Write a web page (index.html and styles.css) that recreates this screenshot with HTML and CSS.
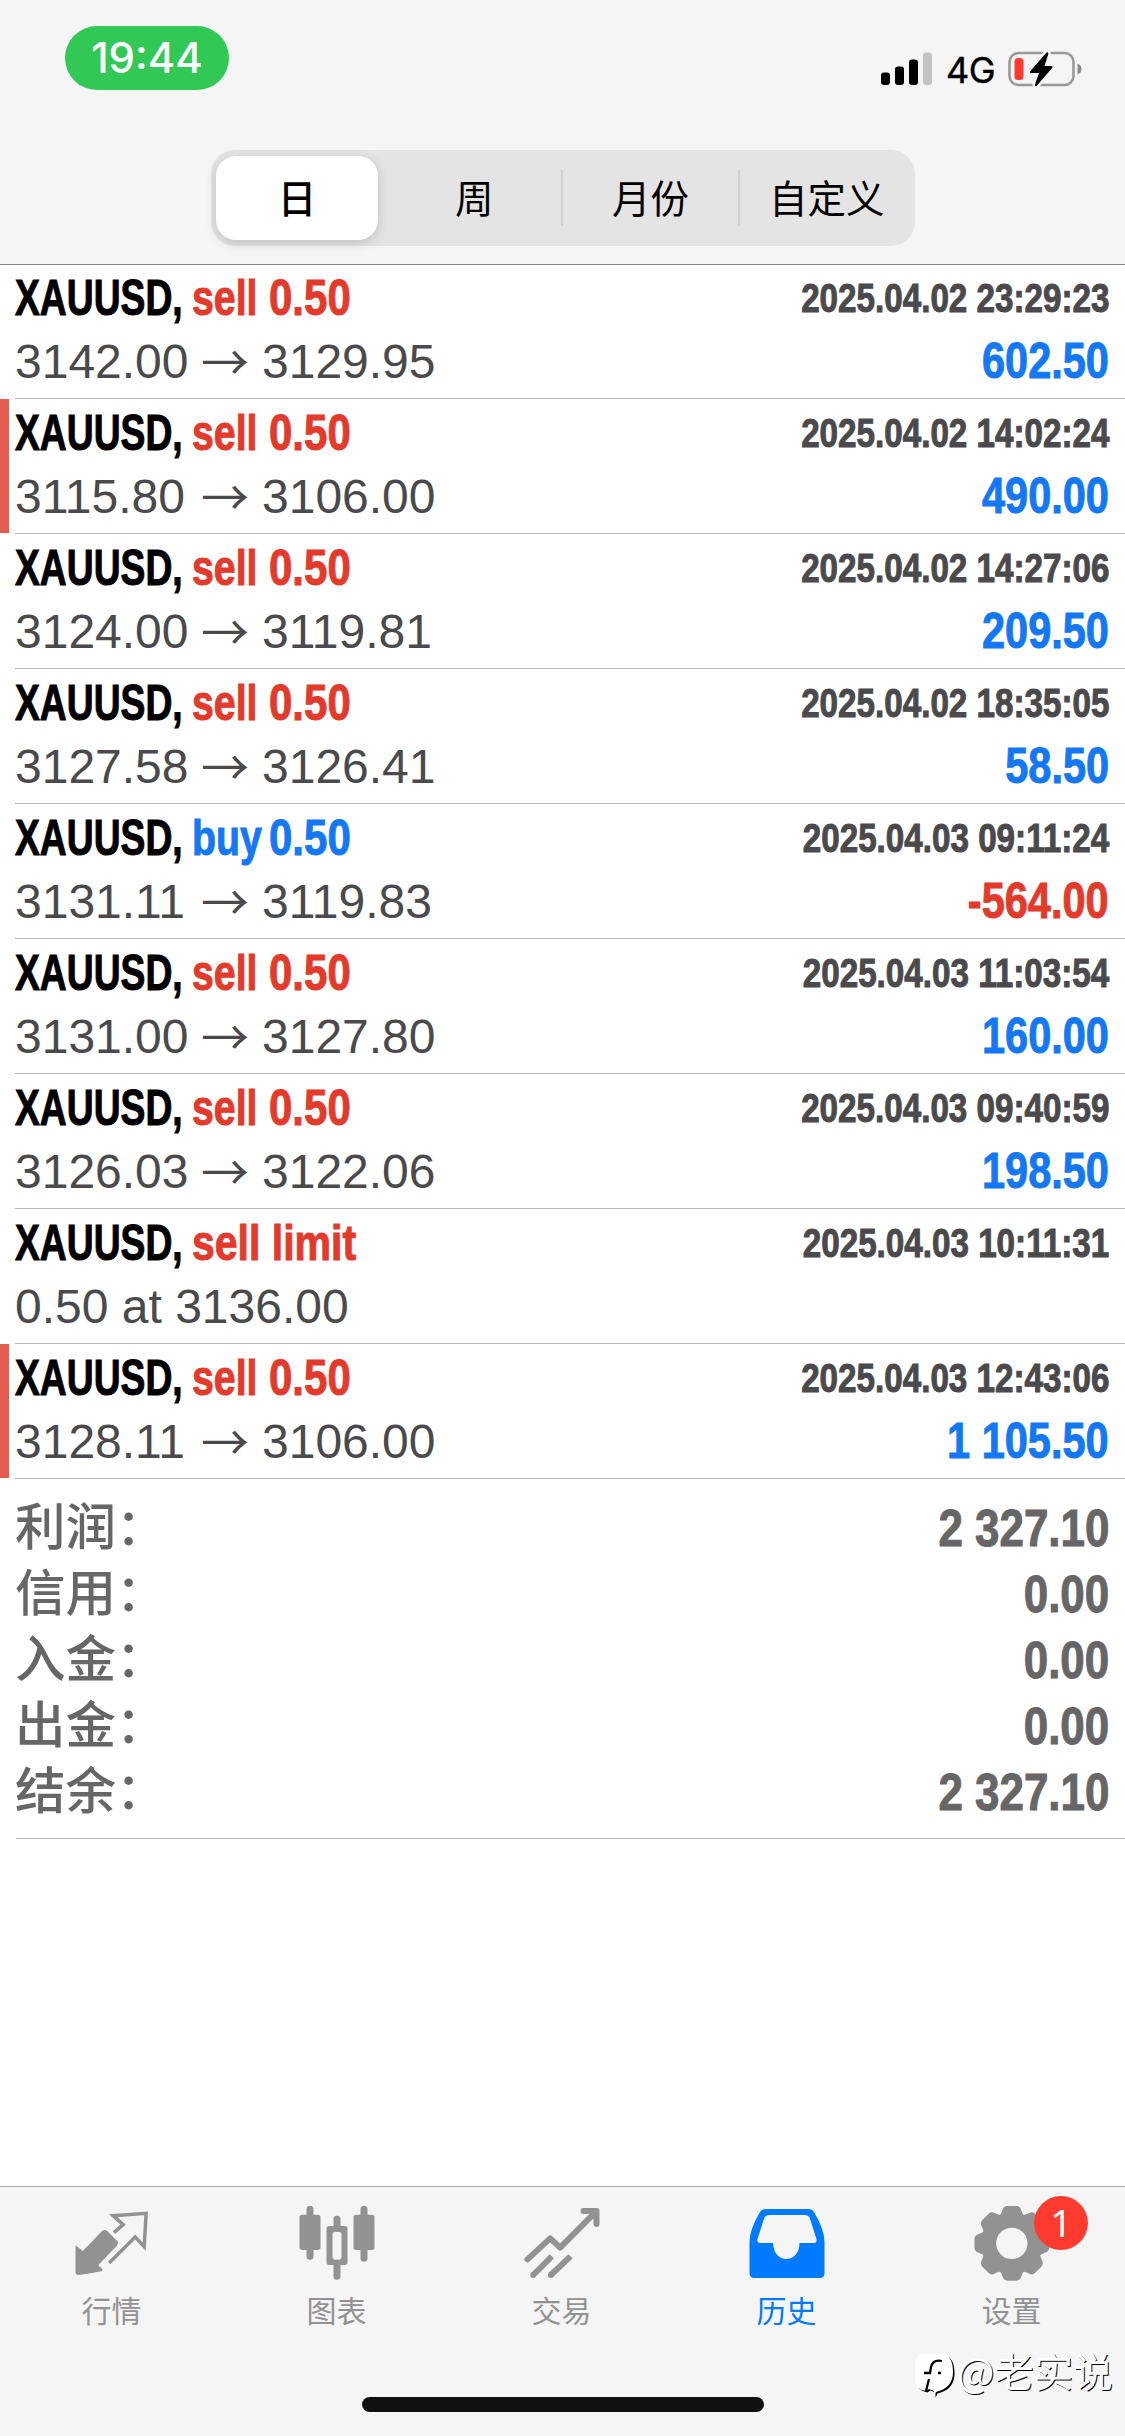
FILE: index.html
```html
<!DOCTYPE html>
<html lang="zh-CN">
<head>
<meta charset="utf-8">
<title>历史</title>
<link rel="stylesheet" href="styles.css">
</head>
<body>
<div class="app">
  <header class="header">
    <div class="status">
      <div class="clock">19:44</div>
      <div class="indicators">
        <svg class="signal" viewBox="0 0 52 34" width="52" height="34">
          <rect x="0" y="20.500" width="9" height="12.500" rx="3"/>
          <rect x="14" y="14.500" width="9" height="18.500" rx="3"/>
          <rect x="28" y="7.500" width="9" height="25.500" rx="3"/>
          <rect x="42" y="0.500" width="9" height="32.500" rx="3" fill="#c4c4c4"/>
        </svg>
        <span class="network">4G</span>
        <svg class="battery" viewBox="0 0 75 36" width="75" height="36">
          <rect x="1.500" y="2" width="64" height="32" rx="9" fill="none" stroke="#999" stroke-width="2.600"/>
          <path d="M69.500 12.500Q73.500 14 73.500 18T69.500 23.500Z" fill="#8c8c8c"/>
          <rect x="6.500" y="7" width="9" height="22" rx="3.500" fill="#ff3b30"/>
          <path class="bolt" d="M38.500 1.500L22 20.500Q21.500 22 23 22H31L27 33.500Q27 36 29 34.500L44.500 16.500Q45 15 43.500 15H36.500L40.300 3Q40.500 0.500 38.500 1.500Z"/>
        </svg>
      </div>
    </div>
    <div class="segments">
      <div class="segment active">日</div>
      <div class="segment">周</div>
      <div class="segment divided">月份</div>
      <div class="segment divided">自定义</div>
    </div>
  </header>

  <main class="history">
    <div class="deal">
      <div class="line"><span class="symbol">XAUUSD,</span><span class="word sell">sell</span><span class="volume sell">0.50</span><span class="time">2025.04.02 23:29:23</span></div>
      <div class="line"><span class="price">3142.00</span><span class="arrow">→</span><span class="price">3129.95</span><span class="profit">602.50</span></div>
    </div>
    <div class="deal marked">
      <div class="line"><span class="symbol">XAUUSD,</span><span class="word sell">sell</span><span class="volume sell">0.50</span><span class="time">2025.04.02 14:02:24</span></div>
      <div class="line"><span class="price">3115.80</span><span class="arrow">→</span><span class="price">3106.00</span><span class="profit">490.00</span></div>
    </div>
    <div class="deal">
      <div class="line"><span class="symbol">XAUUSD,</span><span class="word sell">sell</span><span class="volume sell">0.50</span><span class="time">2025.04.02 14:27:06</span></div>
      <div class="line"><span class="price">3124.00</span><span class="arrow">→</span><span class="price">3119.81</span><span class="profit">209.50</span></div>
    </div>
    <div class="deal">
      <div class="line"><span class="symbol">XAUUSD,</span><span class="word sell">sell</span><span class="volume sell">0.50</span><span class="time">2025.04.02 18:35:05</span></div>
      <div class="line"><span class="price">3127.58</span><span class="arrow">→</span><span class="price">3126.41</span><span class="profit">58.50</span></div>
    </div>
    <div class="deal">
      <div class="line"><span class="symbol">XAUUSD,</span><span class="word buy">buy</span><span class="volume buy">0.50</span><span class="time">2025.04.03 09:11:24</span></div>
      <div class="line"><span class="price">3131.11</span><span class="arrow">→</span><span class="price">3119.83</span><span class="profit loss">-564.00</span></div>
    </div>
    <div class="deal">
      <div class="line"><span class="symbol">XAUUSD,</span><span class="word sell">sell</span><span class="volume sell">0.50</span><span class="time">2025.04.03 11:03:54</span></div>
      <div class="line"><span class="price">3131.00</span><span class="arrow">→</span><span class="price">3127.80</span><span class="profit">160.00</span></div>
    </div>
    <div class="deal">
      <div class="line"><span class="symbol">XAUUSD,</span><span class="word sell">sell</span><span class="volume sell">0.50</span><span class="time">2025.04.03 09:40:59</span></div>
      <div class="line"><span class="price">3126.03</span><span class="arrow">→</span><span class="price">3122.06</span><span class="profit">198.50</span></div>
    </div>
    <div class="deal">
      <div class="line"><span class="symbol">XAUUSD,</span><span class="word limit sell">sell limit</span><span class="time">2025.04.03 10:11:31</span></div>
      <div class="line"><span class="order">0.50 at 3136.00</span></div>
    </div>
    <div class="deal marked">
      <div class="line"><span class="symbol">XAUUSD,</span><span class="word sell">sell</span><span class="volume sell">0.50</span><span class="time">2025.04.03 12:43:06</span></div>
      <div class="line"><span class="price">3128.11</span><span class="arrow">→</span><span class="price">3106.00</span><span class="profit">1 105.50</span></div>
    </div>

    <div class="summary">
      <div class="total"><span>利润：</span><span class="amount">2 327.10</span></div>
      <div class="total"><span>信用：</span><span class="amount">0.00</span></div>
      <div class="total"><span>入金：</span><span class="amount">0.00</span></div>
      <div class="total"><span>出金：</span><span class="amount">0.00</span></div>
      <div class="total"><span>结余：</span><span class="amount">2 327.10</span></div>
    </div>
  </main>

  <nav class="tabs">
    <div class="tab">
      <svg class="icon" viewBox="217.500 99 240 240">
        <path d="M225 228Q226 225 229 229L247 243L304 184Q312 176 320 183L351 214Q356 220 350 226L293 286L305 296Q308 301 302 304Q270 311 235 315Q225 315 225 306Z"/>
        <path d="M340 188L368 164L338 137L437 130L431 230L404 201L326 279" fill="none" stroke="currentColor" stroke-width="10.500"/>
      </svg>
      <span>行情</span>
    </div>
    <div class="tab">
      <svg class="icon" viewBox="892.500 99 240 240">
        <path d="M928.500 118V259M1009.500 148V175M1009.500 280V319M1090.500 118V265" stroke="currentColor" stroke-width="21" stroke-linecap="round"/>
        <rect x="897" y="134" width="63" height="106" rx="8"/>
        <rect x="1059" y="134" width="63" height="106" rx="8"/>
        <path fill-rule="evenodd" d="M986 168H1033Q1041 168 1041 176V277Q1041 285 1033 285H986Q978 285 978 277V176Q978 168 986 168ZM1004 185Q996 186 996 194V260Q996 268 1004 269H1015Q1023 268 1023 260V194Q1023 186 1015 185Z"/>
      </svg>
      <span>图表</span>
    </div>
    <div class="tab">
      <svg class="icon" viewBox="307.500 99 240 240">
        <g fill="none" stroke="currentColor" stroke-width="18" stroke-linejoin="round">
          <path stroke-linecap="round" d="M321 268L389 205L419 233L524 127M489 123H528V162"/>
          <path d="M394 259L338 315M450 259L391 315"/>
        </g>
        <circle cx="338" cy="315" r="9"/><circle cx="391" cy="315" r="9"/>
      </svg>
      <span>交易</span>
    </div>
    <div class="tab current">
      <svg class="icon" viewBox="982.500 99 240 240">
        <path fill-rule="evenodd" d="M1036 117H1163Q1175 117 1181 127Q1212 180 1212 215V310Q1212 324 1198 324H1001Q987 324 987 310V215Q987 180 1018 127Q1024 117 1036 117ZM1046 135Q1036 135 1031 145L1011 207Q1009 219 1019 219H1058C1058 283 1137 283 1137 219H1180Q1190 219 1188 207L1168 145Q1163 135 1153 135Z"/>
      </svg>
      <span>历史</span>
    </div>
    <div class="tab">
      <svg class="icon" viewBox="397.500 99 240 240">
        <g transform="translate(514 220)">
          <g id="teeth">
            <path id="tooth" d="M-40 -78L-32 -90L-26 -105Q-22 -112 -14 -112H14Q22 -112 26 -105L32 -90L40 -78Z"/>
            <use href="#tooth" transform="rotate(45)"/>
            <use href="#tooth" transform="rotate(90)"/>
            <use href="#tooth" transform="rotate(135)"/>
          </g>
          <use href="#teeth" transform="rotate(180)"/>
          <circle r="69" fill="none" stroke="currentColor" stroke-width="44"/>
        </g>
      </svg>
      <span>设置</span>
      <b class="badge">1</b>
    </div>
  </nav>
  <div class="home"></div>
  <div class="watermark">
    <svg viewBox="0 0 42 46" width="42" height="46">
      <path d="M9 1H30Q39 4 39 19Q39 35 22 39L20 43L20 38L15 36L12 38Q2 37 1 26V10Q2 2 9 1Z" fill="#000" transform="translate(1.500 1.500)"/>
      <path d="M9 1H30Q39 4 39 19Q39 35 22 39L20 42L20 38L15 36L12 38Q2 37 1 26V10Q2 2 9 1Z" fill="#fff"/>
      <path d="M28 8Q19 6 17 14L16 20H10M15 26L12 38M24 20H27" fill="none" stroke="#000" stroke-width="2.300"/>
    </svg>
    <span>@老实说</span>
  </div>
</div>
</body>
</html>
```
FILE: styles.css
```css
* { box-sizing: border-box; }
body {
  margin: 0;
  background: #fff;
  font-family: "Liberation Sans", "Noto Sans CJK SC", sans-serif;
}
.app {
  position: relative;
  display: flex;
  flex-direction: column;
  width: 1125px;
  height: 2436px;
  overflow: hidden;
}

/* header */
.header {
  height: 264px;
  background: #f5f5f5;
  box-shadow: 0 1px #858585;
  z-index: 1;
}
.status {
  display: flex;
  justify-content: space-between;
  height: 150px;
  padding: 26px 42px 0 65px;
}
.clock {
  width: 164px;
  height: 64px;
  border-radius: 32px;
  background: #31c855;
  color: #fff;
  font: 500 42px/64px Inter, sans-serif;
  text-align: center;
}
.indicators {
  display: flex;
  align-items: flex-start;
  padding-top: 25px;
}
.signal { margin: 1px 13px 0 0; }
.network {
  width: 62px;
  font: 400 36px/39px Inter, sans-serif;
  -webkit-text-stroke: .4px #000;
  letter-spacing: -.5px;
}
.bolt { stroke: #f5f5f5; stroke-width: 5px; paint-order: stroke; }
.segments {
  display: flex;
  width: 704px;
  height: 96px;
  margin-left: 211px;
  padding: 6px 0;
  border-radius: 24px;
  background: #e4e4e5;
}
.segment {
  flex: 1;
  position: relative;
  font: 400 38.500px/80px "Noto Sans CJK SC", sans-serif;
  text-align: center;
}
.segment.active {
  flex: none;
  width: 162px;
  margin: 0 8px 0 5px;
  border-radius: 20px;
  background: #fff;
  font-weight: 500;
  box-shadow: 0 3px 12px rgba(0, 0, 0, .16);
}
.divided::before {
  content: "";
  position: absolute;
  left: -1px;
  top: 14px;
  width: 2px;
  height: 56px;
  background: #d0d0d2;
}

/* deals */
.deal {
  position: relative;
  height: 135px;
  padding: 4px 16px 0 15px;
}
.deal::after {
  content: "";
  position: absolute;
  left: 15px;
  right: 0;
  bottom: 0;
  height: 1px;
  background: #bababc;
}
.deal.marked::before {
  content: "";
  position: absolute;
  left: 0;
  top: 0;
  bottom: 1px;
  width: 9px;
  background: #e25d4e;
}
.line {
  display: flex;
  height: 62px;
  line-height: 63px;
  font-size: 48px;
  color: #4a4a4c;
  white-space: nowrap;
}
.symbol, .word, .volume, .time, .profit, .amount {
  font-weight: 700;
  font-size: 50px;
  -webkit-text-stroke: 1px currentColor;
  transform-origin: left;
}
.symbol, .word, .volume { line-height: 61px; }
.symbol { width: 177px; color: #000; transform: scaleX(.745); }
.word { width: 77px; transform: scaleX(.785); }
.word.limit { transform: scaleX(.82); }
.volume { transform: scaleX(.84); }
.sell { color: #e33a2c; }
.buy { color: #1478f5; }
.time, .profit, .amount {
  margin-left: auto;
  transform: scaleX(.83);
  transform-origin: right;
}
.time { font-size: 40px; line-height: 60px; }
.profit { color: #1478f5; }
.profit.loss { color: #e33a2c; }
.price { width: 173px; }
.arrow {
  width: 74px;
  font-family: "Noto Sans CJK SC", sans-serif;
  line-height: 59px;
  text-align: center;
}

/* totals */
.summary {
  position: relative;
  height: 360px;
  padding: 16px 16px 0 15px;
}
.summary::after {
  content: "";
  position: absolute;
  left: 16px;
  right: 0;
  bottom: 0;
  height: 1px;
  background: #bababc;
}
.total {
  display: flex;
  height: 66px;
  font: 500 50.500px/66px "Liberation Sans", "Noto Sans CJK SC", sans-serif;
  color: #666;
}
.amount { font-weight: 700; font-size: 52px; transform: scaleX(.845); }

/* tab bar */
.tabs {
  display: flex;
  height: 250px;
  margin-top: auto;
  border-top: 1px solid #a5a5a5;
  background: #f5f5f5;
}
.tab {
  position: relative;
  display: flex;
  flex: 1;
  flex-direction: column;
  align-items: center;
  padding-top: 16px;
  color: #929292;
  font: 400 30px/44px "Noto Sans CJK SC", sans-serif;
}
.tab span { margin: 4px 2px 0 0; }
.current { color: #007aff; }
.icon { width: 80px; height: 80px; fill: currentColor; }
.badge {
  position: absolute;
  left: 134px;
  top: 9px;
  width: 54px;
  height: 54px;
  border-radius: 50%;
  background: #ff3b30;
  color: #fff;
  font: 400 38px/53px "Noto Sans", sans-serif;
  text-align: center;
}
.home {
  position: absolute;
  left: 362px;
  bottom: 24px;
  width: 402px;
  height: 15px;
  border-radius: 8px;
  background: #111;
}
.watermark {
  position: absolute;
  left: 914px;
  top: 2353px;
  display: flex;
  gap: 1px;
  color: #fff;
  font: 400 39.500px/34px "Noto Sans CJK SC", sans-serif;
  text-shadow: 1px 1px 0 #000;
  white-space: nowrap;
}
```
